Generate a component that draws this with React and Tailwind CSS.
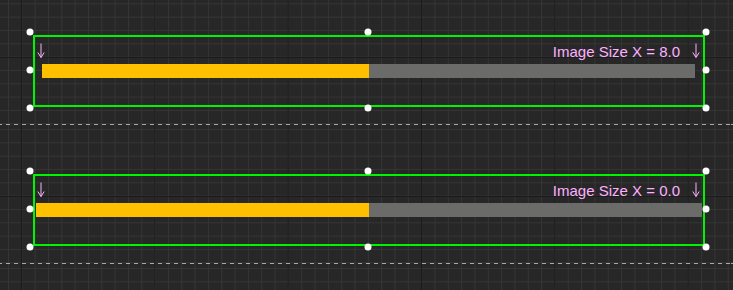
import React from "react";

const panels = [
  { label: "Image Size X = 8.0", barClass: "ml-[7px] mr-[8px]" },
  { label: "Image Size X = 0.0", barClass: "ml-[1px] mr-[1px]" },
  { label: null, barClass: "" },
];

function DownArrow({ className = "" }) {
  return (
    <svg width="8" height="15" viewBox="0 0 8 15" className={`shrink-0 ${className}`}>
      <path d="M4 0.5 V14.5 M0.8 9.5 L4 14.5 L7.2 9.5" stroke="#ffb0ff" strokeWidth="1" fill="none" />
    </svg>
  );
}

function Handle({ pos }) {
  return <div className={`absolute w-[7px] h-[7px] -translate-x-1/2 -translate-y-1/2 rounded-full bg-white ${pos}`} />;
}

function Panel({ label, barClass }) {
  return (
    <div className="relative h-[139px] [background-image:linear-gradient(90deg,#1b1b1b_1px,transparent_1px),linear-gradient(#1b1b1b_1px,transparent_1px),linear-gradient(90deg,#353535_1px,transparent_1px),linear-gradient(#353535_1px,transparent_1px)] [background-size:133.333px_100%,100%_133.333px,13.333px_100%,100%_13.333px] [background-position:21px_0,0_71px,8px_0,0_4px]">
      {label && (
        <>
          <div className="pt-[49px] pl-[33px]">
            <div className="w-[672px] h-[72px] border-2 border-[#00f400] flex flex-col pt-[6px]">
              <div className="h-[15px] flex items-start justify-between">
                <DownArrow className="ml-[2px]" />
                <div className="flex items-start gap-[12px] pr-[3px]">
                  <span className="pt-[1px] text-[15px] leading-[15px] text-[#ffb0ff] font-['Liberation_Sans',Arial,sans-serif]">
                    {label}
                  </span>
                  <DownArrow />
                </div>
              </div>
              <div className={`mt-[6px] h-[14px] flex ${barClass}`}>
                <div className="w-1/2 bg-[#ffc000]" />
                <div className="w-1/2 bg-[#6b6b69]" />
              </div>
            </div>
          </div>
          <div className="absolute left-[30px] top-[46px] w-[676px] h-[76px]">
            <Handle pos="left-0 top-0" />
            <Handle pos="left-1/2 top-0" />
            <Handle pos="left-full top-0" />
            <Handle pos="left-0 top-1/2" />
            <Handle pos="left-full top-1/2" />
            <Handle pos="left-0 top-full" />
            <Handle pos="left-1/2 top-full" />
            <Handle pos="left-full top-full" />
          </div>
        </>
      )}
      <div className="absolute left-0 right-0 bottom-0 h-px [background-image:repeating-linear-gradient(90deg,#a8a8a8_0_4px,transparent_4px_8px)] [background-position:-2px_0]" />
    </div>
  );
}

export default function App() {
  return (
    <div className="w-[733px] h-[290px] overflow-hidden bg-[#272727]">
      <div className="-mt-[14px]">
        {panels.map((p, i) => (
          <Panel key={i} label={p.label} barClass={p.barClass} />
        ))}
      </div>
    </div>
  );
}
